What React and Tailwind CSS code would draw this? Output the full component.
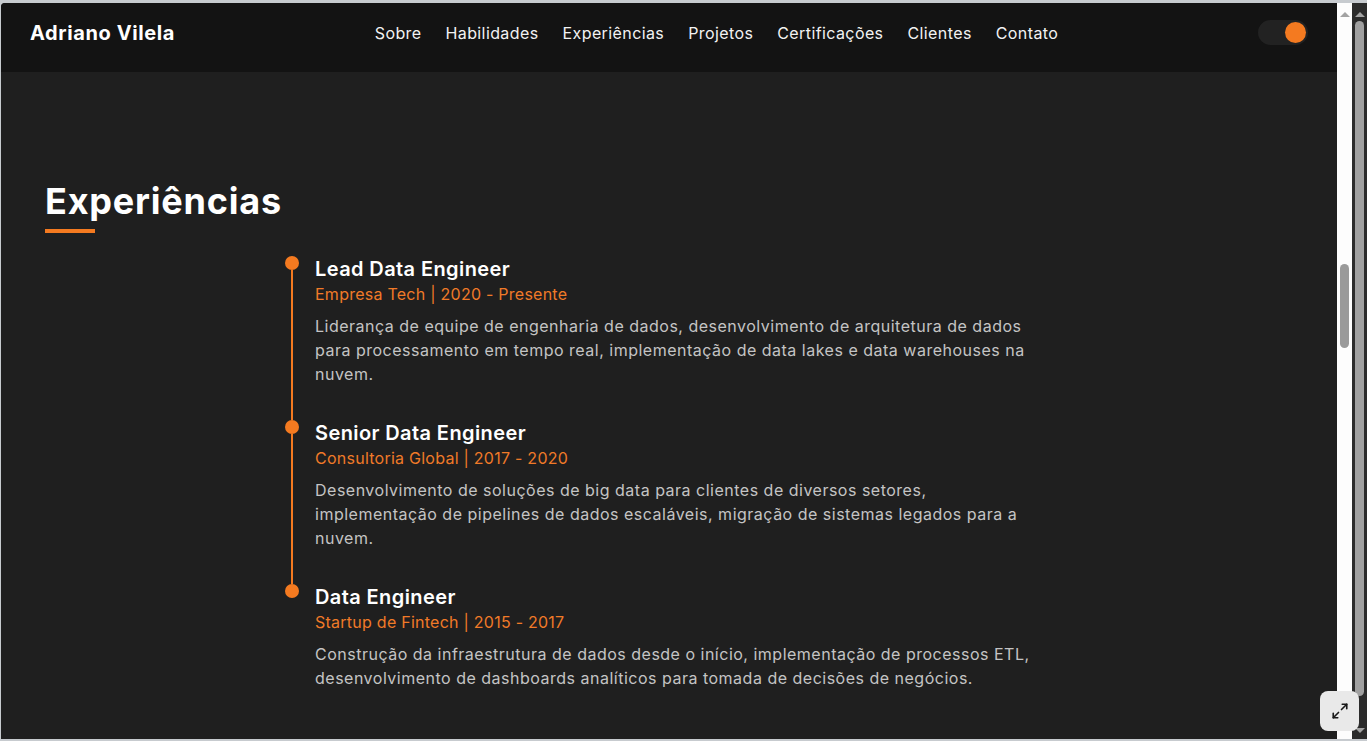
import React from 'react';
import { Maximize2 } from 'lucide-react';

const links = ['Sobre', 'Habilidades', 'Experiências', 'Projetos', 'Certificações', 'Clientes', 'Contato'];

const jobs = [
    {
        title: 'Lead Data Engineer',
        company: 'Empresa Tech | 2020 - Presente',
        text: 'Liderança de equipe de engenharia de dados, desenvolvimento de arquitetura de dados para processamento em tempo real, implementação de data lakes e data warehouses na nuvem.'
    },
    {
        title: 'Senior Data Engineer',
        company: 'Consultoria Global | 2017 - 2020',
        text: 'Desenvolvimento de soluções de big data para clientes de diversos setores, implementação de pipelines de dados escaláveis, migração de sistemas legados para a nuvem.'
    },
    {
        title: 'Data Engineer',
        company: 'Startup de Fintech | 2015 - 2017',
        text: 'Construção da infraestrutura de dados desde o início, implementação de processos ETL, desenvolvimento de dashboards analíticos para tomada de decisões de negócios.'
    }
];

const App = () => {
    return (
        <div className="w-[1367px] h-[741px] bg-[#c7cbcf] pt-[3px] pl-[1px] pb-[2px] flex flex-col overflow-hidden font-['Inter',sans-serif]">
            <div className="flex-1 flex min-h-0 relative">
                {/* page */}
                <div className="flex-1 flex flex-col bg-[#1f1f1f] rounded-tl-[4px] overflow-hidden">
                    <nav className="h-[69px] bg-[#131313] flex items-center justify-between px-[29px] pb-[10px]">
                        <div className="text-white font-bold text-[20px] tracking-[0.6px]">Adriano Vilela</div>
                        <ul className="flex gap-[24px] text-[16px] tracking-[0.4px] text-[#f2f2f2]">
                            {links.map((l) => (
                                <li key={l}>{l}</li>
                            ))}
                        </ul>
                        <div className="w-[50px] h-[25px] rounded-full bg-[#222] flex items-center justify-end pr-[2px]">
                            <div className="w-[21px] h-[21px] rounded-full bg-[#f47a20]" />
                        </div>
                    </nav>

                    <section className="pt-[108px] px-[44px]">
                        <h2 className="text-white font-bold text-[36px] leading-[43px] tracking-[0.8px]">Experiências</h2>
                        <div className="w-[50px] h-[4px] bg-[#f47a20] mt-[6px]" />

                        <div className="w-[768px] mx-auto mt-[23px]">
                            {jobs.map((job, i) => (
                                <div key={job.title} className="flex">
                                    <div className="w-[14px] flex flex-col items-center shrink-0">
                                        <div className="w-[14px] h-[14px] rounded-full bg-[#f47a20] shrink-0" />
                                        {i < jobs.length - 1 && <div className="w-[2px] flex-1 bg-[#f47a20]" />}
                                    </div>
                                    <div className={`ml-[16px] ${i < jobs.length - 1 ? 'pb-[34px]' : ''}`}>
                                        <h3 className="text-white font-semibold text-[20px] leading-[26px] tracking-[0.4px]">{job.title}</h3>
                                        <div className="text-[#f07a28] text-[16px] leading-[24px] tracking-[0.25px] mb-[8px]">{job.company}</div>
                                        <p className="text-[#c4c4c4] text-[16px] leading-[24px] tracking-[0.5px]">{job.text}</p>
                                    </div>
                                </div>
                            ))}
                        </div>
                    </section>
                </div>

                {/* inner scrollbar */}
                <div className="w-[15px] bg-[#fdfdfd] flex flex-col items-center pt-[9px]">
                    <div className="w-0 h-0 border-l-[5px] border-r-[5px] border-b-[5px] border-l-transparent border-r-transparent border-b-[#a3a3a3]" />
                    <div className="w-[9px] h-[84px] rounded-full bg-[#9a9a9a] mt-[247px]" />
                </div>

                {/* outer scrollbar */}
                <div className="w-[15px] bg-[#2b2b2b] flex flex-col items-center pt-[9px] pb-[6px]">
                    <div className="w-0 h-0 border-l-[5px] border-r-[5px] border-b-[5px] border-l-transparent border-r-transparent border-b-[#a3a3a3]" />
                    <div className="w-[9px] flex-1 rounded-full bg-[#a0a0a0] mt-[4px] mb-[32px]" />
                    <div className="w-0 h-0 border-l-[5px] border-r-[5px] border-t-[5px] border-l-transparent border-r-transparent border-t-[#a3a3a3]" />
                </div>

                <button className="absolute left-[1319px] top-[688px] w-[39px] h-[40px] rounded-[8px] bg-[#e9e9e9] flex items-center justify-center text-[#1a1a1a]">
                    <Maximize2 size={18} strokeWidth={2.2} />
                </button>
            </div>
        </div>
    );
};

export default App;
